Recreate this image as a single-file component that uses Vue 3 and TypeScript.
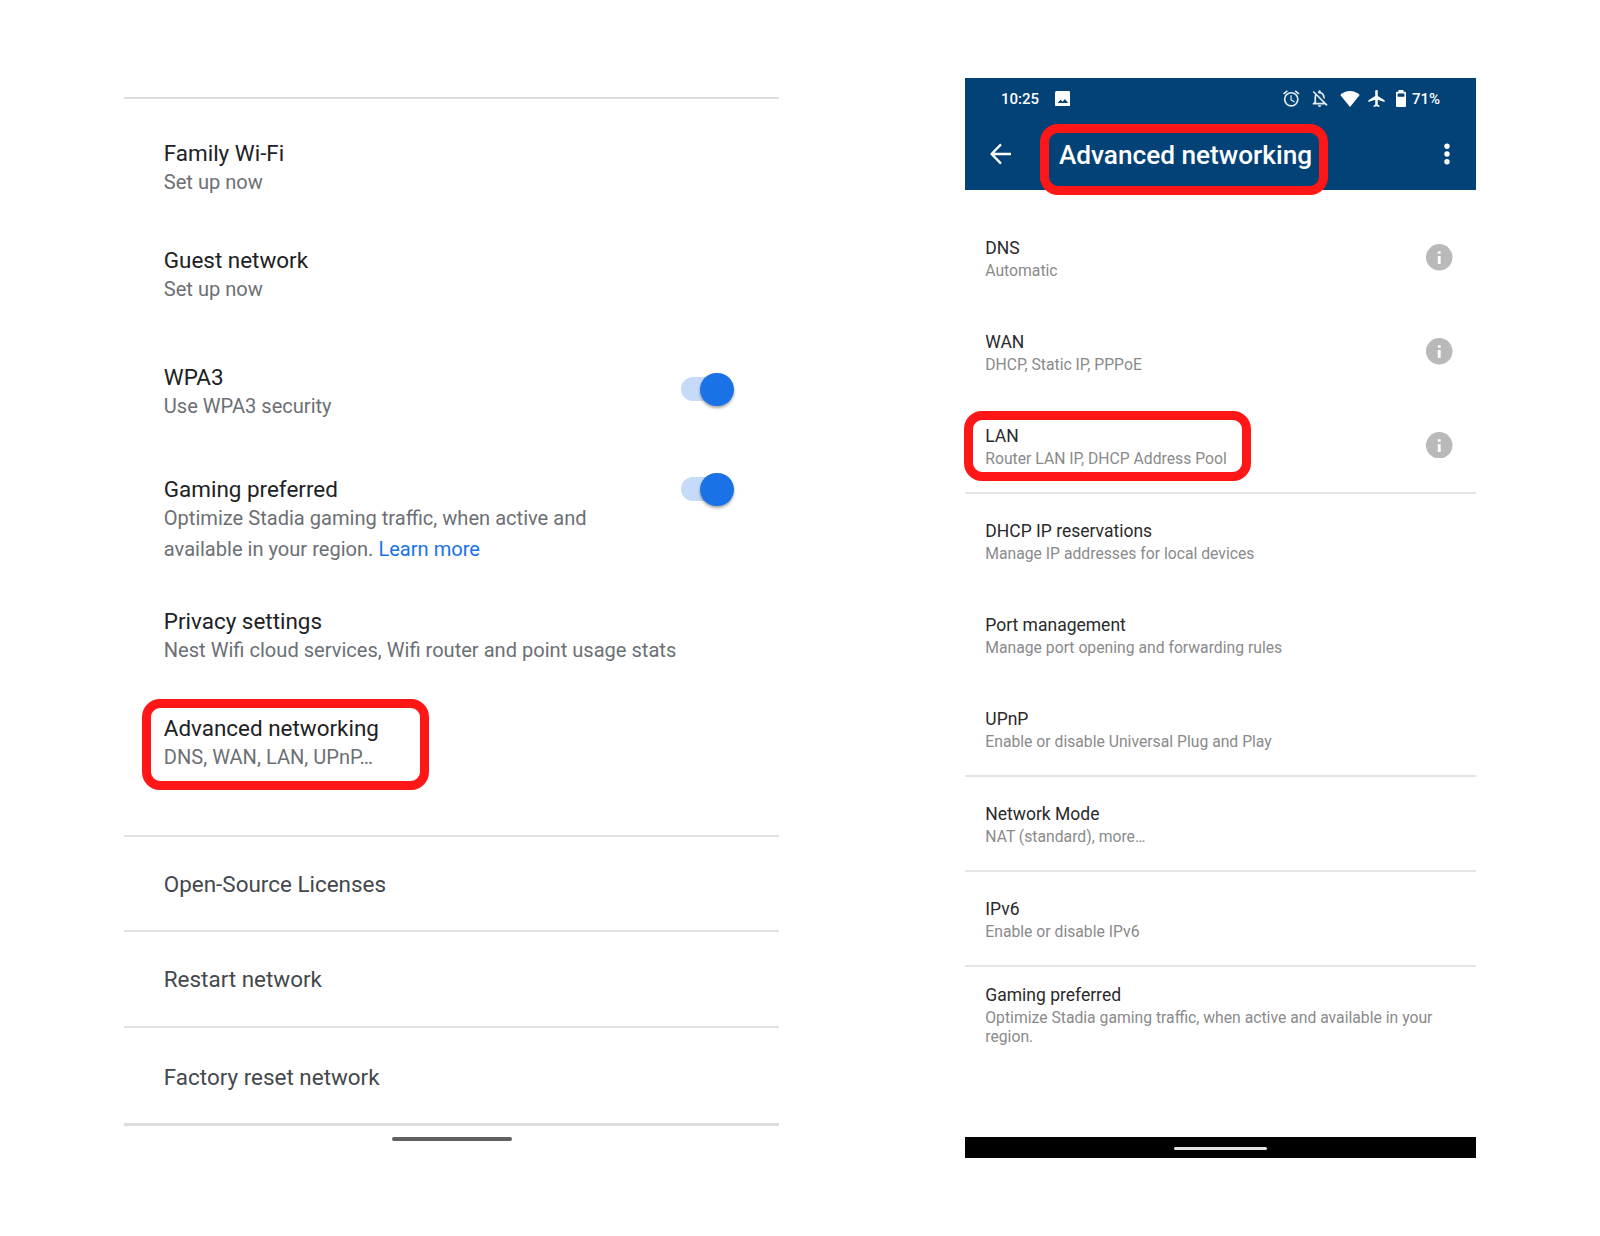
<script setup lang="ts">
interface Setting {
  id: string
  title: string
  detail: string
  tail?: string
  link?: string
  toggle?: boolean
  info?: boolean
  marked?: boolean
}

const networkSettings: Setting[] = [
  { id: 'family', title: 'Family Wi-Fi', detail: 'Set up now' },
  { id: 'guest', title: 'Guest network', detail: 'Set up now' },
  { id: 'wpa3', title: 'WPA3', detail: 'Use WPA3 security', toggle: true },
  {
    id: 'gaming',
    title: 'Gaming preferred',
    detail: 'Optimize Stadia gaming traffic, when active and',
    tail: 'available in your region.',
    link: 'Learn more',
    toggle: true,
  },
  { id: 'privacy', title: 'Privacy settings', detail: 'Nest Wifi cloud services, Wifi router and point usage stats' },
  { id: 'advanced', title: 'Advanced networking', detail: 'DNS, WAN, LAN, UPnP…', marked: true },
]

const actions = [
  { id: 'licenses', label: 'Open-Source Licenses' },
  { id: 'restart', label: 'Restart network' },
  { id: 'reset', label: 'Factory reset network' },
]

const advancedGroups: { id: string; items: Setting[] }[] = [
  {
    id: 'addresses',
    items: [
      { id: 'dns', title: 'DNS', detail: 'Automatic', info: true },
      { id: 'wan', title: 'WAN', detail: 'DHCP, Static IP, PPPoE', info: true },
      { id: 'lan', title: 'LAN', detail: 'Router LAN IP, DHCP Address Pool', info: true, marked: true },
    ],
  },
  {
    id: 'ports',
    items: [
      { id: 'dhcp', title: 'DHCP IP reservations', detail: 'Manage IP addresses for local devices' },
      { id: 'port', title: 'Port management', detail: 'Manage port opening and forwarding rules' },
      { id: 'upnp', title: 'UPnP', detail: 'Enable or disable Universal Plug and Play' },
    ],
  },
  { id: 'mode', items: [{ id: 'nat', title: 'Network Mode', detail: 'NAT (standard), more…' }] },
  { id: 'ipv6', items: [{ id: 'v6', title: 'IPv6', detail: 'Enable or disable IPv6' }] },
  {
    id: 'stadia',
    items: [
      {
        id: 'game',
        title: 'Gaming preferred',
        detail: 'Optimize Stadia gaming traffic, when active and available in your region.',
      },
    ],
  },
]
</script>

<template>
  <main class="page">
    <section class="panel">
      <div class="settings">
        <div v-for="s in networkSettings" :key="s.id" class="row" :class="s.id">
          <div class="copy">
            <div class="title">{{ s.title }}</div>
            <div class="detail">{{ s.detail }}</div>
            <div v-if="s.tail" class="detail tail">
              <span>{{ s.tail }}</span>
              <a class="link">{{ s.link }}</a>
            </div>
          </div>
          <span v-if="s.toggle" class="switch"><span class="knob"></span></span>
          <span v-if="s.marked" class="mark"></span>
        </div>
      </div>
      <div v-for="a in actions" :key="a.id" class="action" :class="a.id">{{ a.label }}</div>
      <div class="home"></div>
    </section>

    <section class="phone">
      <header class="header">
        <div class="status">
          <span class="time">10:25</span>
          <svg class="photo" viewBox="0 0 16 16">
            <path fill="#fff" fill-rule="evenodd" d="M1.800 0h12.400a1.800 1.800 0 0 1 1.800 1.800v12.400a1.800 1.800 0 0 1-1.800 1.800H1.800a1.800 1.800 0 0 1-1.800-1.800V1.800a1.800 1.800 0 0 1 1.800-1.800zM2.700 12.400h10.800L10.300 8.200 7.900 11.200 5.800 9z" />
          </svg>
          <svg class="alarm" viewBox="2 2 20 20">
            <path fill="#e3ebf2" d="M22 5.720l-4.600-3.860-1.290 1.530 4.600 3.860L22 5.720zM7.880 3.390L6.600 1.860 2 5.710l1.290 1.530 4.590-3.850zM12.500 8H11v6l4.750 2.850.75-1.230-4-2.370V8zM12 4a9 9 0 1 0 .001 18.001A9 9 0 0 0 12 4zm0 16a7 7 0 1 1 0-14 7 7 0 0 1 0 14z" />
          </svg>
          <svg class="bell" viewBox="3.500 2.300 18 19.700">
            <path fill="#e3ebf2" d="M12 22c1.100 0 2-.9 2-2h-4c0 1.100.9 2 2 2zm0-15.500c2.490 0 4 2.020 4 4.500v.1l2 2V11c0-3.070-1.630-5.640-4.500-6.320V4c0-.83-.67-1.500-1.500-1.500s-1.500.67-1.500 1.500v.68c-.24.06-.47.15-.69.23l1.640 1.640c.18-.02.36-.05.55-.05zM5.410 3.350L4 4.760l2.810 2.810C6.290 8.570 6 9.740 6 11v5l-2 2v1h14.240l1.740 1.740 1.410-1.410L5.410 3.350zM16 17H8v-6c0-.68.120-1.320.340-1.900L16 16.760V17z" />
          </svg>
          <svg class="wifi" viewBox="0 0 20 16">
            <path fill="#fff" d="M10 16 .3 4C3 1.400 6.400 0 10 0s7 1.400 9.700 4z" />
          </svg>
          <svg class="plane" viewBox="2 2 19 20">
            <path fill="#fff" d="M21 16v-2l-8-5V3.500C13 2.670 12.330 2 11.500 2S10 2.670 10 3.500V9l-8 5v2l8-2.500V19l-2 1.500V22l3.500-1 3.500 1v-1.500L13 19v-5.500l8 2.500z" />
          </svg>
          <svg class="battery" viewBox="0 0 10 17">
            <path fill="#fff" fill-rule="evenodd" d="M2.500 0h5v1.700H9a1 1 0 0 1 1 1V16a1 1 0 0 1-1 1H1a1 1 0 0 1-1-1V2.700a1 1 0 0 1 1-1h1.500zM1.600 3.500v3.200h6.800V3.500z" />
          </svg>
          <span class="percent">71%</span>
        </div>
        <div class="bar">
          <svg class="back" viewBox="0 0 22 22">
            <path d="M21 11H2M11 1.400 1.600 11l9.400 9.600" fill="none" stroke="#fff" stroke-width="2.300" />
          </svg>
          <h1 class="heading">Advanced networking<span class="mark"></span></h1>
          <svg class="more" viewBox="0 0 6 22">
            <circle cx="3" cy="3.200" r="2.700" fill="#fff" />
            <circle cx="3" cy="11" r="2.700" fill="#fff" />
            <circle cx="3" cy="18.800" r="2.700" fill="#fff" />
          </svg>
        </div>
      </header>

      <div v-for="g in advancedGroups" :key="g.id" class="group" :class="g.id">
        <div v-for="s in g.items" :key="s.id" class="item">
          <div class="copy">
            <div class="name">{{ s.title }}</div>
            <div class="note">{{ s.detail }}</div>
          </div>
          <svg v-if="s.info" class="info" viewBox="0 0 26 26">
            <circle cx="13" cy="13" r="13" fill="#b9b9b9" />
            <path d="M11.600 7h2.800v2.500h-2.800zM11.600 11.700h2.800v7.800h-2.800z" fill="#fff" />
          </svg>
          <span v-if="s.marked" class="mark"></span>
        </div>
      </div>

      <footer class="nav"><span class="handle"></span></footer>
    </section>
  </main>
</template>

<style>
body {
  margin: 0;
  background: #fff;
}
</style>

<style scoped>
.page {
  box-sizing: border-box;
  width: 1600px;
  height: 1236px;
  display: flex;
  align-items: flex-start;
  overflow: hidden;
  background: #fff;
  font-family: Roboto, 'Liberation Sans', sans-serif;
}

.mark {
  position: absolute;
  box-sizing: border-box;
  border: 9px solid #ff1616;
  border-radius: 18px;
}

/* Network settings list */
.panel {
  width: 655px;
  margin: 97px 0 0 124.400px;
  border-top: 2px solid #dcdde2;
}
.settings {
  padding: 40px 0 1px 39.400px;
}
.row {
  position: relative;
  height: 107px;
}
.row .copy {
  width: 540px;
}
.guest {
  height: 117px;
}
.wpa3 {
  height: 112px;
}
.gaming {
  height: 132px;
}
.advanced {
  height: 120px;
}
.title {
  font-size: 22.450px;
  line-height: 28px;
  color: #202124;
}
.detail {
  font-size: 20.080px;
  line-height: 30px;
  color: #6c7075;
}
.tail {
  display: flex;
  gap: 5px;
  padding-top: 1px;
}
.link {
  color: #1a73e8;
}
.switch {
  position: absolute;
  left: 517px;
  top: 14px;
  width: 50px;
  height: 24px;
  border-radius: 12px;
  background: #c5dbf9;
}
.gaming .switch {
  top: 2px;
}
.knob {
  position: absolute;
  left: 19.500px;
  top: -4.500px;
  width: 33.500px;
  height: 33.500px;
  border-radius: 50%;
  background: #1a72e6;
  box-shadow: 0 2px 3px rgba(0, 0, 0, 0.35);
}
.advanced .mark {
  left: -21.300px;
  top: -15px;
  width: 287px;
  height: 91px;
}
.action {
  box-sizing: border-box;
  height: 95px;
  padding: 33px 0 0 39.400px;
  border-top: 2px solid #dfe1e5;
  font-size: 22.450px;
  line-height: 28px;
  color: #44484d;
}
.restart {
  height: 96px;
}
.reset {
  height: 100px;
  padding-top: 35px;
  border-bottom: 3px solid #dadce0;
}
.home {
  width: 120px;
  height: 4px;
  margin: 11px 0 0 267.400px;
  border-radius: 2px;
  background: #606163;
}

/* Advanced networking screen */
.phone {
  width: 511.600px;
  margin: 78px 0 0 185.300px;
}
.header {
  height: 112px;
  background: #034276;
  color: #fff;
}
.status {
  display: flex;
  align-items: center;
  height: 41px;
  padding-left: 36.300px;
  font-size: 15px;
  font-weight: 500;
}
.time {
  width: 54px;
  padding-top: 1px;
}
.photo {
  width: 15.500px;
  height: 15.500px;
}
.alarm {
  width: 16.500px;
  height: 17px;
  margin-left: 213px;
}
.bell {
  width: 16px;
  height: 17px;
  margin-left: 12.500px;
}
.wifi {
  width: 20px;
  height: 16px;
  margin-left: 11.500px;
}
.plane {
  width: 17px;
  height: 17px;
  margin-left: 8px;
}
.battery {
  width: 10px;
  height: 17px;
  margin-left: 11.500px;
}
.percent {
  margin-left: 5.500px;
  padding-top: 1px;
}
.bar {
  display: flex;
  align-items: center;
  height: 71px;
}
.back {
  width: 22px;
  height: 22px;
  margin: 0 0 2px 25.500px;
}
.heading {
  position: relative;
  width: 360px;
  margin: 1px 0 0 46.700px;
  font-size: 26.200px;
  line-height: 34px;
  font-weight: 500;
  white-space: nowrap;
}
.heading .mark {
  left: -18.700px;
  top: -14px;
  width: 287.500px;
  height: 71px;
}
.more {
  width: 6px;
  height: 22px;
  margin: 0 0 2px 25.500px;
}
.group {
  box-sizing: border-box;
  height: 95px;
  padding: 26px 0 0 20.600px;
  border-bottom: 2px solid #e5e5e6;
}
.addresses {
  height: 304px;
  padding-top: 47px;
}
.ports {
  height: 283px;
  padding-top: 26px;
}
.stadia {
  height: 170px;
  padding-top: 17px;
  border-bottom: 0;
}
.item {
  position: relative;
  height: 93.800px;
}
.item .copy {
  width: 470px;
}
.name {
  font-size: 17.500px;
  line-height: 22px;
  color: #2a2a2b;
}
.note {
  padding-top: 3px;
  font-size: 15.730px;
  line-height: 18.500px;
  color: #8a8a8b;
}
.info {
  position: absolute;
  left: 441px;
  top: 7.400px;
  width: 26.500px;
  height: 26.500px;
}
.item .mark {
  left: -21px;
  top: -14px;
  width: 287px;
  height: 70px;
}
.nav {
  display: flex;
  align-items: center;
  justify-content: center;
  height: 20.700px;
  background: #000;
}
.handle {
  width: 93px;
  height: 3px;
  margin-top: 2px;
  border-radius: 2px;
  background: #e4e4e4;
}
</style>
